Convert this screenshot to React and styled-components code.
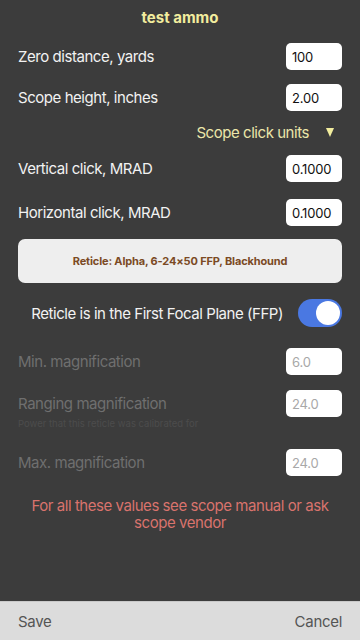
import React from "react";
import styled, { createGlobalStyle } from "styled-components";

const Global = createGlobalStyle`
  html, body { margin: 0; padding: 0; background: #3c3c3c; }
  body { font-family: Inter, "Noto Sans", "Liberation Sans", sans-serif; }
  * { box-sizing: border-box; }
`;

const Page = styled.div`
  width: 360px;
  height: 640px;
  display: flex;
  flex-direction: column;
  background: #3c3c3c;
  overflow: hidden;
`;

const Content = styled.div`
  display: flex;
  flex-direction: column;
  padding: 0 18px;
`;

const Title = styled.div`
  height: 36px;
  line-height: 36px;
  text-align: center;
  font-weight: 700;
  font-size: 15px;
  color: #f2ed9e;
`;

const Row = styled.div`
  display: flex;
  align-items: center;
  justify-content: space-between;
  height: 27px;
  margin-top: ${(p) => p.$mt || 0}px;
`;

const Label = styled.div`
  font-size: 15px;
  white-space: nowrap;
  color: ${(p) => (p.$disabled ? "#6f6f6f" : "#f2f2f2")};
  letter-spacing: -0.45px;
`;

const Input = styled.div`
  width: 56px;
  height: 27px;
  border-radius: 5px;
  background: #ffffff;
  padding-left: 6px;
  display: flex;
  align-items: center;
  font-size: 13px;
  letter-spacing: -0.2px;
  color: ${(p) => (p.$disabled ? "#a8a8a8" : "#111")};
`;

const UnitsRow = styled.div`
  display: flex;
  justify-content: flex-end;
  align-items: center;
  gap: 17px;
  height: 20px;
  margin-top: 11px;
  padding-right: 8px;
  font-size: 15px;
  letter-spacing: -0.45px;
  color: #ebe6aa;
`;

const Triangle = styled.span`
  width: 0;
  height: 0;
  border-left: 4.5px solid transparent;
  border-right: 4.5px solid transparent;
  border-top: 9px solid #f2ed9e;
`;

const ReticleButton = styled.div`
  margin-top: 13px;
  height: 44px;
  border-radius: 7px;
  background: #eeeeee;
  display: flex;
  align-items: center;
  justify-content: center;
  font-size: 11px;
  font-weight: 700;
  letter-spacing: -0.15px;
  color: #7b4a24;
`;

const ToggleRow = styled.div`
  display: flex;
  align-items: center;
  justify-content: flex-end;
  gap: 15px;
  height: 28px;
  margin-top: 16px;
`;

const Switch = styled.div`
  width: 44px;
  height: 28px;
  border-radius: 14px;
  background: #4a78e2;
  display: flex;
  align-items: center;
  justify-content: flex-end;
  padding-right: 2px;
`;

const Knob = styled.div`
  width: 24px;
  height: 24px;
  border-radius: 50%;
  background: #fff;
`;

const Hint = styled.div`
  height: 14px;
  line-height: 14px;
  font-size: 9.5px;
  color: #4c4c4c;
`;

const Warning = styled.div`
  margin-top: 21px;
  text-align: center;
  font-size: 15px;
  line-height: 17px;
  letter-spacing: -0.45px;
  color: #d9736d;
  padding: 0 10px;
`;

const Footer = styled.div`
  margin-top: auto;
  height: 39px;
  background: #dcdcdc;
  border-top: 1px solid #c9c9c9;
  display: flex;
  align-items: center;
  justify-content: space-between;
  padding: 0 18px;
  font-size: 15px;
  letter-spacing: -0.3px;
  color: #555555;
`;

export default function App() {
  return (
    <Page>
      <Global />
      <Content>
        <Title>test ammo</Title>
        <Row $mt={7}>
          <Label>Zero distance, yards</Label>
          <Input>100</Input>
        </Row>
        <Row $mt={14}>
          <Label>Scope height, inches</Label>
          <Input>2.00</Input>
        </Row>
        <UnitsRow>
          <span>Scope click units</span>
          <Triangle />
        </UnitsRow>
        <Row $mt={13}>
          <Label>Vertical click, MRAD</Label>
          <Input>0.1000</Input>
        </Row>
        <Row $mt={17}>
          <Label>Horizontal click, MRAD</Label>
          <Input>0.1000</Input>
        </Row>
        <ReticleButton>Reticle: Alpha, 6-24×50 FFP, Blackhound</ReticleButton>
        <ToggleRow>
          <Label>Reticle is in the First Focal Plane (FFP)</Label>
          <Switch>
            <Knob />
          </Switch>
        </ToggleRow>
        <Row $mt={21}>
          <Label $disabled>Min. magnification</Label>
          <Input $disabled>6.0</Input>
        </Row>
        <Row $mt={15}>
          <Label $disabled>Ranging magnification</Label>
          <Input $disabled>24.0</Input>
        </Row>
        <Hint>Power that this reticle was calibrated for</Hint>
        <Row $mt={18}>
          <Label $disabled>Max. magnification</Label>
          <Input $disabled>24.0</Input>
        </Row>
        <Warning>For all these values see scope manual or ask scope vendor</Warning>
      </Content>
      <Footer>
        <span>Save</span>
        <span>Cancel</span>
      </Footer>
    </Page>
  );
}
